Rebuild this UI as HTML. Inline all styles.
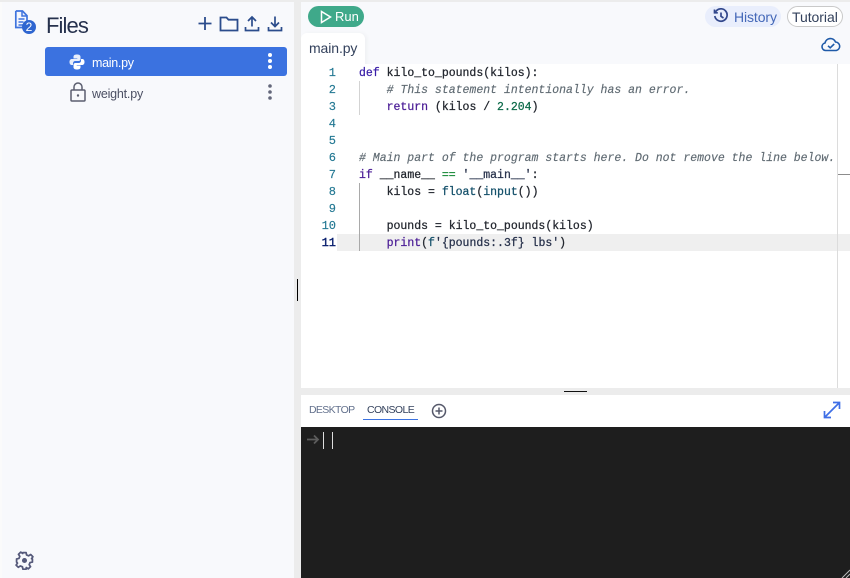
<!DOCTYPE html>
<html><head><meta charset="utf-8">
<style>
html,body{margin:0;padding:0;width:850px;height:578px;overflow:hidden;background:#fff;font-family:"Liberation Sans",sans-serif}
div,span,svg{position:absolute}
pre span,.code span{position:static}
.ln{left:301px;width:35px;text-align:right;font:12px/17px "Liberation Mono",monospace;color:#237893;height:17px;-webkit-text-stroke:.15px currentColor}
.cl{left:359px;font:11.5px/17px "Liberation Mono",monospace;color:#22262e;white-space:pre;height:17px;-webkit-text-stroke:.25px currentColor}
.k{color:#3a1fa8}.c{color:#5f6a72;font-style:italic;-webkit-text-stroke:.15px currentColor}.n{color:#0d6b4a}.s{color:#26304a}.o{color:#1a8a3a}.f{color:#14506a}.p{color:#4b1d96}
</style></head><body>
<div style="left:0;top:0;width:850px;height:578px;background:#ececec"></div>
<div style="left:0;top:2px;width:2px;height:576px;background:#fbfbfb"></div>
<div style="left:2px;top:2px;width:292px;height:576px;background:#f8f9fc"></div>
<div style="left:301px;top:2px;width:549px;height:62px;background:#f8f9fc"></div>

<!-- files icon -->
<svg style="left:13px;top:9px" width="24" height="26" viewBox="0 0 24 26" fill="none" stroke="#3f74de" stroke-width="1.700"><path d="M2.800 2h6.700l4.500 4.700v7M2.800 2v16.500h7" fill="#f3f5fd"/><path d="M9 2v5h5M5.500 10h6M5.500 13h5M5.500 16h4" stroke-width="1.500"/><circle cx="16" cy="18" r="7" fill="#2f66d0" stroke="none"/></svg>
<div style="left:23px;top:20px;width:12px;text-align:center;font-size:12px;line-height:14px;color:#fff">2</div>
<div style="left:46px;top:12px;font-size:22px;line-height:27px;color:#26314d;letter-spacing:-.9px">Files</div>

<!-- toolbar -->
<svg style="left:196px;top:14px" width="90" height="20" viewBox="0 0 90 20" fill="none" stroke="#2b4c8c" stroke-width="1.800">
<path d="M9 3v13M2.500 9.500h13"/>
<path d="M24.500 16.500v-13h6l2 2.200h9v10.800z"/>
<path d="M56 12.500v-9M52 7l4-4 4 4M49.500 13v3.500h13V13" stroke-width="1.700"/>
<path d="M79 2.500v9.500M75 8.500l4 4 4-4M72.500 13v3.500h13V13" stroke-width="1.700"/>
</svg>

<!-- main row -->
<div style="left:45px;top:47px;width:242px;height:29px;background:#3b72e0;border-radius:3px"></div>
<svg style="left:69px;top:54px" width="16" height="16" viewBox="0 0 16 16"><path d="M8 .5C5 .5 4.500 1.600 4.500 3v1.500H8.300V5H3C1.300 5 .5 6.300.5 8s.8 3 2.200 3h1.300V9.300c0-1.300 1-2.300 2.300-2.300h3.400c1 0 1.800-.8 1.800-1.800V2.800C11.500 1.200 10 .5 8 .5z" fill="#e8eefb"/><path d="M8 15.500c3 0 3.500-1.100 3.500-2.500v-1.500H7.700V11H13c1.700 0 2.500-1.300 2.500-3s-.8-3-2.200-3H12v1.700c0 1.300-1 2.300-2.300 2.300H6.300c-1 0-1.800.8-1.800 1.800v2.400c0 1.600 1.500 2.300 3.500 2.300z" fill="#fff"/></svg>
<div style="left:92px;top:55px;font-size:12.500px;line-height:16px;color:#fff;letter-spacing:-.3px">main.py</div>
<svg style="left:266px;top:52px" width="8" height="18"><circle cx="4" cy="3" r="2" fill="#fff"/><circle cx="4" cy="9" r="2" fill="#fff"/><circle cx="4" cy="15" r="2" fill="#fff"/></svg>

<!-- weight row -->
<svg style="left:69px;top:82px" width="18" height="21" viewBox="0 0 18 21" fill="none" stroke="#5a5d6e" stroke-width="1.500"><rect x="2" y="8" width="14" height="11" rx="1"/><path d="M5 8V5a4 4 0 0 1 8 0v3"/><circle cx="9" cy="13.500" r="1.200" fill="#5a5d6e" stroke="none"/></svg>
<div style="left:92px;top:86px;font-size:12.500px;line-height:16px;color:#4b4f63;letter-spacing:-.2px">weight.py</div>
<svg style="left:266px;top:83px" width="8" height="18"><circle cx="4" cy="3" r="1.800" fill="#63677a"/><circle cx="4" cy="9" r="1.800" fill="#63677a"/><circle cx="4" cy="15" r="1.800" fill="#63677a"/></svg>

<!-- gear -->
<svg style="left:15px;top:551px" width="19" height="19" viewBox="0 0 24 24" fill="none" stroke="#55597a" stroke-width="2.200" stroke-linejoin="round"><path d="M10 2h4l.6 3 2.700 1.100 2.500-1.700 2.800 2.800-1.700 2.500L22 10v4l-3 .6-1.100 2.700 1.700 2.500-2.800 2.800-2.500-1.700-.3 2.100h-4l-.6-3-2.700-1.100-2.500 1.700-2.800-2.800 1.700-2.500L2 14v-4l3-.6 1.100-2.700-1.700-2.500 2.800-2.800 2.500 1.700z"/><circle cx="12" cy="12" r="3.200" fill="#55597a" stroke="none"/></svg>

<!-- run -->
<div style="left:308px;top:6px;width:56px;height:21px;background:#3fa98a;border-radius:11px"></div>
<svg style="left:320px;top:10px" width="12" height="14" viewBox="0 0 12 14" fill="none" stroke="#fff" stroke-width="1.500"><path d="M1.500 1.500v11l9-5.500z"/></svg>
<div style="left:335px;top:9px;font-size:13px;line-height:16px;color:#fff">Run</div>

<!-- history -->
<div style="left:705px;top:6px;width:76px;height:21px;background:#e9eefc;border-radius:11px"></div>
<svg style="left:713px;top:8px" width="16" height="16" viewBox="0 0 16 16" fill="none" stroke="#33488c" stroke-width="1.700"><path d="M2.500 4A6.200 6.200 0 1 1 1.800 8"/><path d="M1.500 1.500v3.300h3.300" /><path d="M8 4.500V8.300l2.500 1.700"/></svg>
<div style="left:734px;top:9px;font-size:14px;line-height:17px;color:#4468b8;letter-spacing:-.1px">History</div>
<div style="left:787px;top:6px;width:54px;height:19px;background:#fff;border:1px solid #c9c9c9;border-radius:11px"></div>
<div style="left:792px;top:9px;font-size:14px;line-height:17px;color:#33415c;letter-spacing:-.05px">Tutorial</div>
<svg style="left:821px;top:36px" width="20" height="16" viewBox="0 0 20 16" fill="none" stroke="#1f5aa8" stroke-width="1.600"><path d="M5 14.500H4.500a3.800 3.800 0 0 1-.5-7.500 5.500 5.500 0 0 1 10.500-1 4.300 4.300 0 0 1 .8 8.500z"/><path d="M7 9.800l2.200 2 4-3.800"/></svg>

<!-- tab -->
<div style="left:301px;top:33px;width:64px;height:40px;background:#fff;border-radius:6px 6px 0 0;box-shadow:2px 0 4px rgba(0,0,0,.04)"></div>
<div style="left:309px;top:40px;font-size:14px;line-height:17px;color:#33415c;letter-spacing:-.1px">main.py</div>

<!-- editor -->
<div style="left:301px;top:64px;width:549px;height:324px;background:#fff"></div>
<div style="left:337px;top:234px;width:513px;height:17px;background:#efefef"></div>
<div style="left:837px;top:64px;width:1px;height:324px;background:#dcdcdc"></div>
<div style="left:838px;top:174px;width:12px;height:1px;background:#8c8c8c"></div>
<div style="left:359px;top:81px;width:1px;height:34px;background:#d3d3d3"></div>
<div style="left:359px;top:183px;width:1px;height:68px;background:#a9a9a9"></div>

<div class="ln" style="top:65px">1</div>
<div class="ln" style="top:82px">2</div>
<div class="ln" style="top:99px">3</div>
<div class="ln" style="top:116px">4</div>
<div class="ln" style="top:133px">5</div>
<div class="ln" style="top:150px">6</div>
<div class="ln" style="top:167px">7</div>
<div class="ln" style="top:184px">8</div>
<div class="ln" style="top:201px">9</div>
<div class="ln" style="top:218px">10</div>
<div class="ln" style="top:235px;color:#0b216f;-webkit-text-stroke:.4px #0b216f">11</div>

<div class="cl code" style="top:65px"><span class="k">def</span> kilo_to_pounds(kilos):</div>
<div class="cl code" style="top:82px">    <span class="c"># This statement intentionally has an error.</span></div>
<div class="cl code" style="top:99px">    <span class="p">return</span> (kilos / <span class="n">2.204</span>)</div>
<div class="cl code" style="top:150px"><span class="c"># Main part of the program starts here. Do not remove the line below.</span></div>
<div class="cl code" style="top:167px"><span class="p">if</span> __name__ <span class="o">==</span> <span class="s">'__main__'</span>:</div>
<div class="cl code" style="top:184px">    kilos = <span class="f">float</span>(<span class="f">input</span>())</div>
<div class="cl code" style="top:218px">    pounds = kilo_to_pounds(kilos)</div>
<div class="cl code" style="top:235px">    <span class="p">print</span>(<span class="f">f</span><span class="s">'{pounds:.3f} lbs'</span>)</div>

<!-- splitters -->
<div style="left:297px;top:279px;width:1px;height:22px;background:#000"></div>
<div style="left:564px;top:391px;width:23px;height:1px;background:#111"></div>

<!-- console header -->
<div style="left:301px;top:395px;width:549px;height:32px;background:#fff"></div>
<div style="left:309px;top:404px;font-size:10.500px;line-height:13px;color:#62708c;letter-spacing:-.65px">DESKTOP</div>
<div style="left:367px;top:404px;font-size:10.500px;line-height:13px;color:#33415c;letter-spacing:-.6px">CONSOLE</div>
<div style="left:363px;top:419px;width:55px;height:1px;background:#3b72e0"></div>
<svg style="left:431px;top:403px" width="16" height="16" viewBox="0 0 16 16" fill="none" stroke="#55586a" stroke-width="1.500"><circle cx="8" cy="8" r="6.500"/><path d="M4.500 8h7M8 4.500v7"/></svg>
<svg style="left:823px;top:401px" width="18" height="18" viewBox="0 0 18 18" fill="none" stroke="#3f6fe6" stroke-width="1.700"><path d="M2 16L16 2M10 1.500h6.500V8M1.500 10v6.500H8"/></svg>

<!-- terminal -->
<div style="left:301px;top:427px;width:549px;height:151px;background:#1e1e1e"></div>
<svg style="left:307px;top:434px" width="13" height="11" viewBox="0 0 13 11" fill="none" stroke="#5c5c5c" stroke-width="1.800"><path d="M0 5.500h11M7 1.500l4 4-4 4"/></svg>
<div style="left:323px;top:432px;width:1px;height:17px;background:#ddd"></div>
<div style="left:332px;top:432px;width:1px;height:17px;background:#ddd"></div>
<svg style="left:840px;top:568px" width="10" height="10" fill="none" stroke="#bbb" stroke-width="1"><path d="M2 10L10 2M6 10l4-4"/></svg>
</body></html>
